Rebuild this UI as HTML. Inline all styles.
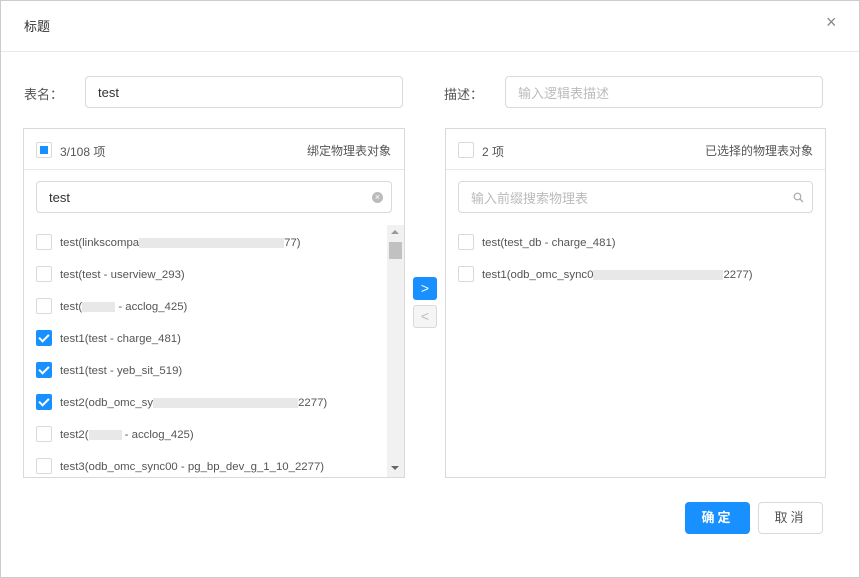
<html><head><style>
body{margin:0;width:860px;height:578px;font-family:"Liberation Sans","Noto Sans CJK SC",sans-serif;font-size:12px;color:#555;background:#fff;position:relative;overflow:hidden}
.a{position:absolute}
.box{position:absolute;border:1px solid #d9d9d9;box-sizing:border-box}
.inp{position:absolute;border:1px solid #d9d9d9;border-radius:4px;box-sizing:border-box;font-size:13px;padding-left:12px;display:flex;align-items:center}
.cb{position:absolute;width:16px;height:16px;border:1px solid #d9d9d9;border-radius:2px;box-sizing:border-box;background:#fff}
.cb.on{background:#1890ff;border-color:#1890ff}
.cb.on:after{content:"";position:absolute;left:4px;top:1px;width:4px;height:8px;border:solid #fff;border-width:0 2px 2px 0;transform:rotate(45deg)}
.it{position:absolute;font-size:11.4px;color:#555;white-space:nowrap;margin-top:2px}
.hd{position:absolute;font-size:12px;color:#555;white-space:nowrap}
.bl{display:inline-block;height:10px;background:#e8e8e8;vertical-align:middle}
</style></head><body>
<div class="box" style="left:0;top:0;width:860px;height:578px;border-color:#ccc"></div>
<div class="a" style="left:24px;top:16px;font-size:13px;color:#333">标题</div>
<div class="a" style="left:826px;top:12px;font-size:18px;color:#888;font-weight:300">×</div>
<div class="a" style="left:1px;top:51px;width:858px;height:1px;background:#e8e8e8"></div>
<div class="a" style="left:24px;top:84px;font-size:13px">表名：</div>
<div class="inp" style="left:85px;top:76px;width:318px;height:32px;color:#333">test</div>
<div class="a" style="left:444px;top:84px;font-size:13px">描述：</div>
<div class="inp" style="left:505px;top:76px;width:318px;height:32px;color:#bbb">输入逻辑表描述</div>

<div class="box" style="left:23px;top:128px;width:382px;height:350px"></div>
<div class="a" style="left:24px;top:169px;width:380px;height:1px;background:#e8e8e8"></div>
<div class="cb" style="left:36px;top:142px"></div><div class="a" style="left:40px;top:146px;width:8px;height:8px;background:#1890ff"></div>
<div class="hd" style="left:60px;top:143px">3/108 项</div>
<div class="hd" style="left:307px;top:142px">绑定物理表对象</div>
<div class="inp" style="left:36px;top:181px;width:356px;height:32px;color:#333">test</div>
<div class="a" style="left:372px;top:192px;width:11px;height:11px;border-radius:50%;background:#bbb;color:#fff;font-size:9px;line-height:11px;text-align:center">×</div>
<div class="a" style="left:387px;top:225px;width:17px;height:252px;background:#f1f1f1"></div>
<div class="a" style="left:389px;top:242px;width:13px;height:17px;background:#c1c1c1"></div>
<div class="a" style="left:391px;top:230px;border:4px solid transparent;border-bottom:4px solid #999;border-top:0"></div>
<div class="a" style="left:391px;top:466px;border:4px solid transparent;border-top:4px solid #666;border-bottom:0"></div>

<div class="cb" style="left:36px;top:234px"></div><div class="it" style="left:60px;top:235px">test(linkscompa<span class="bl" style="width:145px"></span>77)</div>
<div class="cb" style="left:36px;top:266px"></div><div class="it" style="left:60px;top:267px">test(test - userview_293)</div>
<div class="cb" style="left:36px;top:298px"></div><div class="it" style="left:60px;top:299px">test(<span class="bl" style="width:33px"></span> - acclog_425)</div>
<div class="cb on" style="left:36px;top:330px"></div><div class="it" style="left:60px;top:331px">test1(test - charge_481)</div>
<div class="cb on" style="left:36px;top:362px"></div><div class="it" style="left:60px;top:363px">test1(test - yeb_sit_519)</div>
<div class="cb on" style="left:36px;top:394px"></div><div class="it" style="left:60px;top:395px">test2(odb_omc_sy<span class="bl" style="width:145px"></span>2277)</div>
<div class="cb" style="left:36px;top:426px"></div><div class="it" style="left:60px;top:427px">test2(<span class="bl" style="width:33px"></span> - acclog_425)</div>
<div class="cb" style="left:36px;top:458px"></div><div class="it" style="left:60px;top:459px">test3(odb_omc_sync00 - pg_bp_dev_g_1_10_2277)</div>

<div class="a" style="left:413px;top:277px;width:24px;height:23px;background:#1890ff;border-radius:3px;color:#fff;text-align:center;line-height:22px;font-size:14px">&gt;</div>
<div class="a" style="left:413px;top:305px;width:24px;height:23px;background:#f5f5f5;border:1px solid #d9d9d9;box-sizing:border-box;border-radius:3px;color:#bbb;text-align:center;line-height:20px;font-size:14px">&lt;</div>

<div class="box" style="left:445px;top:128px;width:381px;height:350px"></div>
<div class="a" style="left:446px;top:169px;width:379px;height:1px;background:#e8e8e8"></div>
<div class="cb" style="left:458px;top:142px"></div>
<div class="hd" style="left:482px;top:143px">2 项</div>
<div class="hd" style="left:705px;top:142px">已选择的物理表对象</div>
<div class="inp" style="left:458px;top:181px;width:355px;height:32px;color:#bbb">输入前缀搜索物理表</div>
<svg class="a" style="left:793px;top:192px" width="11" height="11" viewBox="0 0 11 11"><circle cx="4.5" cy="4.5" r="3.3" fill="none" stroke="#aaa" stroke-width="1.2"/><line x1="7" y1="7" x2="10" y2="10" stroke="#aaa" stroke-width="1.3"/></svg>
<div class="cb" style="left:458px;top:234px"></div><div class="it" style="left:482px;top:235px">test(test_db - charge_481)</div>
<div class="cb" style="left:458px;top:266px"></div><div class="it" style="left:482px;top:267px">test1(odb_omc_sync0<span class="bl" style="width:130px"></span>2277)</div>

<div class="a" style="left:685px;top:502px;width:65px;height:32px;background:#1890ff;border-radius:4px;color:#fff;text-align:center;line-height:32px;font-size:13px;font-weight:bold;letter-spacing:3px">确定</div>
<div class="a" style="left:758px;top:502px;width:65px;height:32px;border:1px solid #d9d9d9;box-sizing:border-box;border-radius:4px;color:#555;text-align:center;line-height:30px;font-size:13px;letter-spacing:3px">取消</div>
</body></html>
